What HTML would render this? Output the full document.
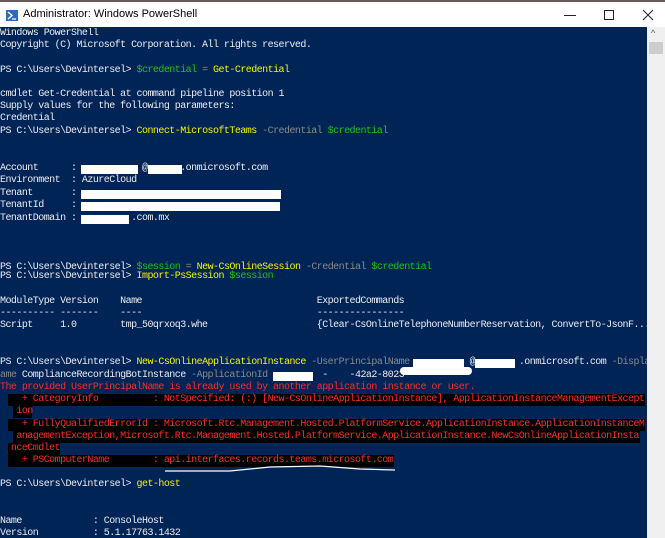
<!DOCTYPE html>
<html><head><meta charset="utf-8"><style>
*{margin:0;padding:0;box-sizing:border-box}
body{width:665px;height:538px;overflow:hidden;background:#012456;position:relative;font-family:"Liberation Mono",monospace}
#top{position:absolute;left:0;top:0;width:665px;height:3px;background:#6b5a5a}
#title{position:absolute;left:0;top:2px;width:665px;height:25px;background:#fff;font-family:"Liberation Sans",sans-serif;font-size:11px;color:#000}
#title .t{position:absolute;left:23px;top:6px}
#icon{position:absolute;left:6px;top:8px;width:12px;height:11px;background:#2e6bbf}
#con{position:absolute;left:0;top:28px;width:647px;height:510px;overflow:hidden}
.l{position:absolute;left:0;height:12px;line-height:12px;font-size:10px;color:#eeedf0;white-space:pre;letter-spacing:-0.54px}
.y{color:#f5f500}.g{color:#16c60c}.gr{color:#8a8a8a}.r{color:#ff2b2b}
.bk{position:absolute;height:12px;background:#000}
.w{position:absolute;background:#fff;height:9px}
#sb{position:absolute;left:647px;top:27px;width:18px;height:511px;background:#f0f0f0}
#thumb{position:absolute;left:649px;top:42px;width:14px;height:12px;background:#cdcdcd}
</style></head><body>
<div id="top"></div>
<div id="title"><div id="icon"><svg width="12" height="11"><path d="M2 2 L6 5.5 L2 9" stroke="#fff" stroke-width="1.4" fill="none"/><path d="M6 9 H10" stroke="#fff" stroke-width="1.2"/></svg></div><span class="t">Administrator: Windows PowerShell</span>
<svg style="position:absolute;left:560px;top:6px" width="100" height="14"><path d="M4 7.5 H16" stroke="#222" stroke-width="1"/><rect x="44.5" y="2.5" width="9" height="9" stroke="#222" fill="none"/><path d="M83 2 L93 12 M93 2 L83 12" stroke="#222" stroke-width="1"/></svg>
</div>
<div id="con">
<div class="bk" style="left:8px;top:366px;width:637px"></div>
<div class="bk" style="left:13px;top:378px;width:19px"></div>
<div class="bk" style="left:8px;top:391px;width:637px"></div>
<div class="bk" style="left:13px;top:403px;width:627px"></div>
<div class="bk" style="left:8px;top:415px;width:52px"></div>
<div class="bk" style="left:8px;top:427px;width:386px"></div>
<div class="l" style="top:0px">Windows PowerShell</div>
<div class="l" style="top:12px">Copyright (C) Microsoft Corporation. All rights reserved.</div>
<div class="l" style="top:37px">PS C:\Users\Devintersel> <span class="g">$credential</span> <span class="gr">=</span> <span class="y">Get-Credential</span></div>
<div class="l" style="top:61px">cmdlet Get-Credential at command pipeline position 1</div>
<div class="l" style="top:73px">Supply values for the following parameters:</div>
<div class="l" style="top:85px">Credential</div>
<div class="l" style="top:98px">PS C:\Users\Devintersel> <span class="y">Connect-MicrosoftTeams</span> <span class="gr">-Credential</span> <span class="g">$credential</span></div>
<div class="l" style="top:135px">Account      :            @      .onmicrosoft.com</div>
<div class="l" style="top:147px">Environment  : AzureCloud</div>
<div class="l" style="top:160px">Tenant       : </div>
<div class="l" style="top:172px">TenantId     : </div>
<div class="l" style="top:185px">TenantDomain :          .com.mx</div>
<div class="w" style="left:81px;top:137px;width:57px"></div>
<div class="w" style="left:148px;top:137px;width:34px"></div>
<div class="w" style="left:81px;top:162px;width:200px"></div>
<div class="w" style="left:81px;top:174px;width:199px"></div>
<div class="w" style="left:81px;top:187px;width:48px"></div>
<div class="l" style="top:234px">PS C:\Users\Devintersel> <span class="g">$session</span> <span class="gr">=</span> <span class="y">New-CsOnlineSession</span> <span class="gr">-Credential</span> <span class="g">$credential</span></div>
<div class="l" style="top:243px">PS C:\Users\Devintersel> <span class="y">Import-PsSession</span> <span class="g">$session</span></div>
<div class="l" style="top:268px">ModuleType Version    Name                                ExportedCommands</div>
<div class="l" style="top:280px">---------- -------    ----                                ----------------</div>
<div class="l" style="top:292px">Script     1.0        tmp_50qrxoq3.whe                    {Clear-CsOnlineTelephoneNumberReservation, ConvertTo-JsonF...</div>
<div class="l" style="top:329px">PS C:\Users\Devintersel> <span class="y">New-CsOnlineApplicationInstance</span> <span class="gr">-UserPrincipalName</span>           @        .onmicrosoft.com <span class="gr">-DisplayN</span></div>
<div class="l" style="top:342px"><span class="gr">ame</span> ComplianceRecordingBotInstance <span class="gr">-ApplicationId</span>          -    -42a2-8023-</div>
<div class="w" style="left:413px;top:331px;width:51px"></div>
<div class="w" style="left:475px;top:331px;width:40px"></div>
<div class="w" style="left:273px;top:344px;width:40px"></div>
<div class="w" style="left:400px;top:339px;width:72px;height:8px;border-radius:4px"></div>
<div class="l r" style="top:354px">The provided UserPrincipalName is already used by another application instance or user.</div>
<div class="l r" style="top:366px">    + CategoryInfo          : NotSpecified: (:) [New-CsOnlineApplicationInstance], ApplicationInstanceManagementExcept</div>
<div class="l r" style="top:378px">   ion</div>
<div class="l r" style="top:391px">    + FullyQualifiedErrorId : Microsoft.Rtc.Management.Hosted.PlatformService.ApplicationInstance.ApplicationInstanceM</div>
<div class="l r" style="top:403px">   anagementException,Microsoft.Rtc.Management.Hosted.PlatformService.ApplicationInstance.NewCsOnlineApplicationInsta</div>
<div class="l r" style="top:415px">  nceCmdlet</div>
<div class="l r" style="top:427px">    + PSComputerName        : api.interfaces.records.teams.microsoft.com</div>
<svg style="position:absolute;left:160px;top:436px" width="240" height="10"><path d="M5 7 L70 7 L110 3 L160 2 L200 5 L235 6" stroke="#fff" stroke-width="1.2" fill="none"/></svg>
<div class="l" style="top:451px">PS C:\Users\Devintersel> <span class="y">get-host</span></div>
<div class="l" style="top:488px">Name             : ConsoleHost</div>
<div class="l" style="top:500px">Version          : 5.1.17763.1432</div>
</div>
<div id="sb"></div>
<div id="thumb"></div>
<div style="position:absolute;left:651px;top:28px;font-size:9px;color:#555;font-family:'Liberation Sans',sans-serif">^</div>
</body></html>
